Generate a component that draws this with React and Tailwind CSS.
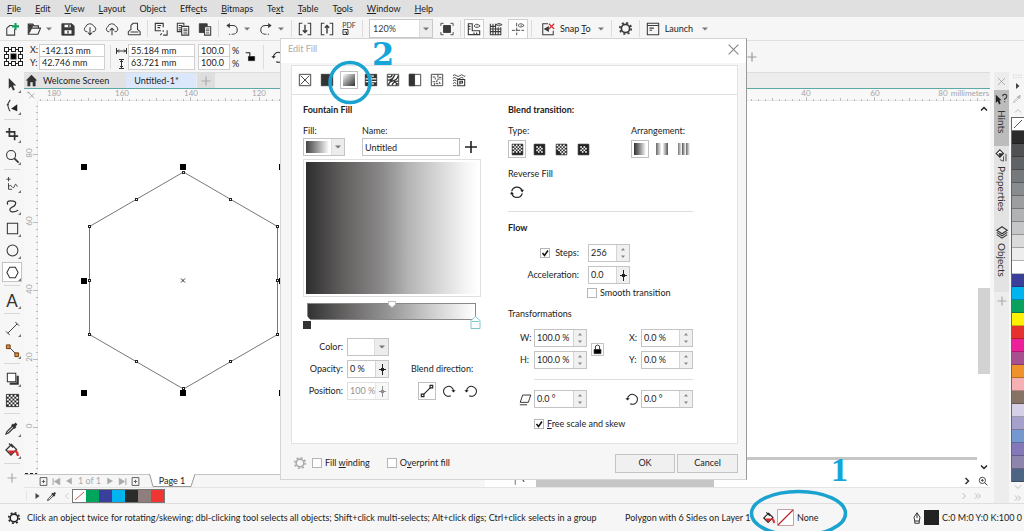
// src/App.jsx
import { useState } from "react";

const MENUS = [
  ["", "F", "ile"],
  ["", "E", "dit"],
  ["", "V", "iew"],
  ["", "L", "ayout"],
  ["Ob", "j", "ect"],
  ["Effe", "c", "ts"],
  ["", "B", "itmaps"],
  ["Te", "x", "t"],
  ["", "T", "able"],
  ["T", "o", "ols"],
  ["", "W", "indow"],
  ["", "H", "elp"],
];

const PALETTE = [
  "#2b2b2b", "#505152", "#606365", "#75797b", "#898c8e", "#9c9ea0", "#b1b2b4",
  "#c5c6c7", "#dadadb", "#ededed", "#ffffff", "#3b3f9c", "#00b4f0", "#0aa05e",
  "#fff100", "#e8302e", "#ec2099", "#a8508f", "#f0922c", "#f6b0b4", "#857466",
  "#d5d0e8", "#a5a0cc", "#7399cf", "#8478b8", "#8d85ac", "#4e6484",
];

const DOC_COLORS = ["#00a65d", "#3b3f9c", "#00b4f0", "#2b2b2b", "#8f7f7c", "#f03535"];

function Icon({ size = 16, className = "", children }) {
  return (
    <svg
      width={size}
      height={size}
      viewBox="0 0 16 16"
      fill="none"
      stroke="currentColor"
      className={`shrink-0 ${className}`}
      aria-hidden="true"
    >
      {children}
    </svg>
  );
}

const Caret = () => (
  <svg width="8" height="8" viewBox="0 0 8 8" className="shrink-0" aria-hidden="true">
    <path d="M1 2.5h6L4 5.5z" fill="#777" />
  </svg>
);

const Gear = ({ size = 16, className }) => (
  <Icon size={size} className={className}>
    <circle cx="8" cy="8" r="4.4" strokeWidth="1.8" />
    <circle cx="8" cy="8" r="6.1" strokeWidth="1.8" strokeDasharray="2.2 2.59" />
  </Icon>
);

const Plus = ({ size = 12, className }) => (
  <Icon size={size} className={className}>
    <path d="M8 2v12M2 8h12" strokeWidth="1.6" />
  </Icon>
);

const Bucket = ({ size = 16 }) => (
  <Icon size={size}>
    <path d="M7.5 2.500l5 5-5.500 5.500-5-5z" fill="#fff" strokeWidth="1.300" />
    <path d="M3.500 8.500h8L7 12.500z" fill="#d8262c" stroke="none" />
    <path d="M5 1.500l4 4" strokeWidth="1.300" />
    <path d="M12 8q2.500 2 2.500 5.500h-1.500q0-2.500-2-4z" fill="#d8262c" stroke="#d8262c" strokeWidth=".8" />
  </Icon>
);

const Dropper = ({ size = 16, className }) => (
  <Icon size={size} className={className}>
    <path d="M2 14l1-2.500 6-6 1.500 1.500-6 6z" strokeWidth="1.200" />
    <path d="M8 4.500l3.500 3.500M10 6l2.500-2.500" strokeWidth="2.600" />
  </Icon>
);

const RotateCcw = ({ size = 16, className }) => (
  <Icon size={size} className={className}>
    <path d="M2.800 8A5.700 5.700 0 1 1 6 13.500" strokeWidth="1.200" />
    <path d="M.4 7l2.500 2.800L5.400 7z" fill="currentColor" stroke="none" />
  </Icon>
);

const RotateCw = ({ size = 16, className }) => (
  <Icon size={size} className={className}>
    <path d="M13.200 8A5.700 5.700 0 1 0 10 13.500" strokeWidth="1.200" />
    <path d="M10.600 7l2.500 2.800L15.600 7z" fill="currentColor" stroke="none" />
  </Icon>
);

// Checker texture shared by the fill and blend icons
function Checks({ x = 2, y = 2, n = 6, skip = () => false }) {
  const cells = [];
  for (let r = 0; r < n; r++) {
    for (let c = 0; c < n; c++) {
      if ((r + c) % 2 === 0 && !skip(r, c)) {
        cells.push(<rect key={`${r}-${c}`} x={x + c * 2} y={y + r * 2} width="2" height="2" />);
      }
    }
  }
  return <g stroke="none" fill="#fff">{cells}</g>;
}

/* ---------- toolbar ---------- */

function Tool({ label, active, children }) {
  return (
    <button
      aria-label={label}
      className={`flex h-[18px] w-[18px] mx-[2px] shrink-0 items-center justify-center ${
        active ? "bg-white outline outline-[#d0d0d0]" : ""
      }`}
    >
      {children}
    </button>
  );
}

const Sep = () => <div className="mx-[2px] h-[17px] w-px shrink-0 bg-[#dcdcdc]" />;

function Toolbar() {
  return (
    <div className="flex h-[24px] shrink-0 items-center overflow-hidden border-b border-[#e0e0e0] bg-[#f6f6f6] pl-px text-[#3a3a3a]">
      <Tool label="New">
        <Icon size={14}>
          <path d="M9 4H5.500L2 7v8h9V8" strokeWidth="1.200" />
          <path d="M12 1v8M8 5h8" stroke="#14a05c" strokeWidth="2.400" />
        </Icon>
      </Tool>
      <Tool label="Open">
        <Icon size={14}>
          <path d="M1.500 13.500v-11h5l1.500 2h5v2.500" strokeWidth="1.400" />
          <path d="M1.500 14L4.500 7h11l-3 7z" strokeWidth="1.300" />
          <path d="M2 3.500h5l-4 8z" fill="currentColor" />
        </Icon>
      </Tool>
      <Caret />
      <div className="w-1 shrink-0" />
      <Tool label="Save">
        <Icon size={14}>
          <path d="M1 2h11.500L15 4.500V15H1z" fill="currentColor" />
          <path d="M4 3h7v3H4zM4 9.500h8v4H4z" fill="#fff" stroke="none" />
          <path d="M9 3v3M8 10v3" strokeWidth="1.500" />
        </Icon>
      </Tool>
      <Tool label="Download from cloud">
        <Icon size={14}>
          <path d="M5 11H3.500a3 3 0 0 1-.3-5.500 4.800 4.500 0 0 1 9.200-.5 3.200 3.200 0 0 1 .3 6H11" strokeWidth="1.100" />
          <path d="M8 6v8M5.500 12L8 14.500l2.500-2.500" strokeWidth="1.200" />
        </Icon>
      </Tool>
      <Tool label="Upload to cloud">
        <Icon size={14}>
          <path d="M5 11H3.500a3 3 0 0 1-.3-5.500 4.800 4.500 0 0 1 9.200-.5 3.200 3.200 0 0 1 .3 6H11" strokeWidth="1.100" />
          <path d="M8 15V7M5.500 9.500L8 7l2.500 2.500" strokeWidth="1.200" />
        </Icon>
      </Tool>
      <Tool label="Print">
        <Icon size={14}>
          <path d="M4.500 9V4L7 1.500h5V9M1.500 14.500V11l3-2.500M12 8.500l3 2.500v3.500H1.500M4 11.500h9" strokeWidth="1.200" />
        </Icon>
      </Tool>
      <Sep />
      <Tool label="Cut">
        <Icon size={14}>
          <path d="M8 10H1.500V1.500h9V6M4 4h4M4 6.500h3" strokeWidth="1.300" />
          <path d="M10.500 9.500v2M15 9.500v5.500h-4.500M9 13l-2 2" strokeWidth="1.200" />
        </Icon>
      </Tool>
      <Tool label="Copy">
        <Icon size={14}>
          <path d="M6 11H1.500V1.500H9V4M3 4h4M3 6.500h3M3 9h3M6.500 5h8v10h-8zM8.500 8H13M8.500 10H13M8.500 12.500H13" strokeWidth="1.200" />
        </Icon>
      </Tool>
      <Tool label="Paste">
        <Icon size={14}>
          <path d="M1.500 2h9v10h-9z" fill="currentColor" />
          <path d="M7.500 5.500h7V15h-7z" fill="#fff" strokeWidth="1.200" />
          <path d="M9 8h4M9 10h4M9 12.500h4" />
        </Icon>
      </Tool>
      <Sep />
      <Tool label="Undo"><Icon size={14}>
        <path d="M4 4h5a5 5 0 0 1 0 10" strokeWidth="1.200" />
        <path d="M9 14H4" strokeDasharray="1.500 1.500" />
        <path d="M5.500 1L1.500 4l4 3z" fill="currentColor" stroke="none" />
      </Icon></Tool>
      <Caret />
      <div className="w-1 shrink-0" />
      <Tool label="Redo"><Icon size={14}>
        <path d="M12 4H7a5 5 0 0 0 0 10" strokeWidth="1.200" />
        <path d="M7 14h5" strokeDasharray="1.500 1.500" />
        <path d="M10.500 1l4 3-4 3z" fill="currentColor" stroke="none" />
      </Icon></Tool>
      <Caret />
      <div className="w-1 shrink-0" />
      <Sep />
      <Tool label="Import"><Icon size={14}>
        <path d="M5 1.500H1.500v13H5M11 1.500h3.500v13H11" strokeWidth="1.200" />
        <path d="M8 3v9M5.500 9.500L8 12l2.500-2.500" strokeWidth="1.600" />
      </Icon></Tool>
      <Tool label="Export"><Icon size={14}>
        <path d="M5 1.500H1.500v13H5M11 1.500h3.500v13H11" strokeWidth="1.200" />
        <path d="M8 13V4M5.500 6.500L8 4l2.500 2.500" strokeWidth="1.600" />
      </Icon></Tool>
      <Tool label="Publish to PDF">
        <span className="flex flex-col items-start text-[7px] leading-[7px]">
          PDF
          <svg width="7" height="6" viewBox="0 0 7 6" fill="none" stroke="currentColor" aria-hidden="true">
            <path d="M1 .5h5v5H1zM2.500 3h2v2" />
          </svg>
        </span>
      </Tool>
      <Sep />
      <div className="relative ml-1 flex h-[19px] w-[64px] shrink-0 items-center">
        <select
          aria-label="Zoom level"
          className="h-full w-full appearance-none border border-[#c9c9c9] bg-white pl-[3px]"
        >
          <option>120%</option>
        </select>
        <div className="pointer-events-none absolute top-px right-px bottom-px flex w-[13px] items-center justify-center border-l border-[#ddd] bg-[#ececec]">
          <Caret />
        </div>
      </div>
      <div className="w-[3px] shrink-0" />
      <Tool label="Full screen"><Icon size={14}>
        <path d="M4 4h8v8H4z" fill="currentColor" />
        <path d="M1 4.500V1.500h3M12 1.500h3v3M15 11.500v3h-3M4 14.500H1v-3" />
      </Icon></Tool>
      <Sep />
      <Tool label="Show rulers" active><Icon size={14}>
        <path d="M1.500 2v12.500h13V10H6V2zM2 5h2M2 8h2M8 14v-2M11 14v-2" strokeWidth="1.300" />
        <path d="M8 4.500q3-4 7 0-4 3.500-7 0zM11 4.500h1" />
      </Icon></Tool>
      <Tool label="Show grid"><Icon size={14}>
        <path d="M1.500 2v12.500h12V6M1.500 5h6M1.500 8h12M1.500 11h12M4.500 2v12M7.500 2v12M10.500 6v8" strokeWidth="1.200" />
        <path d="M8 3q3-3 7 0-4 3-7 0zM11 3h1" />
      </Icon></Tool>
      <Tool label="Show guidelines" active><Icon size={14}>
        <path d="M6.500 1v14M1 9.500h14" strokeDasharray="4 1.500" />
        <path d="M8 4q3-4 7 0-4 3.500-7 0zM11 4h1" />
      </Icon></Tool>
      <Sep />
      <div className="w-[3px] shrink-0" />
      <Tool label="Snap off"><Icon size={14}>
        <path d="M8 2H2v12.500h12V10" strokeWidth="1.200" />
        <path d="M3 8l6-3.500v7z" fill="currentColor" stroke="none" />
        <path d="M9 2l6 6M15 2l-6 6" stroke="#d8262c" strokeWidth="1.300" />
      </Icon></Tool>
      <button className="ml-px flex items-center gap-[6px] whitespace-nowrap text-[#222]">
        <span>Snap <u>T</u>o</span>
        <Caret />
      </button>
      <div className="w-1 shrink-0" />
      <Sep />
      <div className="w-px shrink-0" />
      <Tool label="Options"><Gear size={15} /></Tool>
      <Sep />
      <Tool label="Launcher"><Icon size={14}>
        <path d="M1.500 1.500h13v13h-13zM1.500 4h13M4 7h5M4 9.500h3" strokeWidth="1.200" />
      </Icon></Tool>
      <button className="ml-px flex items-center gap-[8px] text-[#222]">
        Launch
        <Caret />
      </button>
    </div>
  );
}

/* ---------- property bar ---------- */

function PropInput({ label, value, className }) {
  return (
    <input
      aria-label={label}
      defaultValue={value}
      className={`h-[13px] border border-[#d0d0d0] bg-white px-[2px] ${className}`}
    />
  );
}

function PropertyBar() {
  return (
    <div className="flex h-[31px] shrink-0 items-center bg-[#f6f6f6] pl-1">
      <svg width="19" height="19" viewBox="0 0 19 19" fill="none" stroke="#222" className="mr-[7px] shrink-0" aria-hidden="true">
        <path d="M2.500 2.500h14v14h-14z" />
        <g fill="#fff">
          {[[1, 1], [8, 1], [15, 1], [1, 8], [15, 8], [1, 15], [8, 15], [15, 15]].map(([x, y]) => (
            <rect key={`${x}-${y}`} x={x - 0.5} y={y - 0.5} width="4" height="4" />
          ))}
        </g>
        <rect x="7" y="7" width="5" height="5" fill="#000" />
      </svg>
      <div className="flex flex-col">
        <label className="flex items-center">
          <span className="w-[9px]">X:</span>
          <PropInput label="X position" value="-142.13 mm" className="w-[66px]" />
        </label>
        <label className="flex items-center">
          <span className="w-[9px]">Y:</span>
          <PropInput label="Y position" value="42.746 mm" className="w-[66px] border-t-0" />
        </label>
      </div>
      <div className="mx-[5px] h-[24px] w-px bg-[#dcdcdc]" />
      <svg width="11" height="24" viewBox="0 0 11 24" fill="none" stroke="#333" className="mr-px shrink-0" aria-hidden="true">
        <path d="M.5 3v6M10.500 3v6M1 6h9M3 4.500L1.500 6 3 7.500M8 4.500L9.500 6 8 7.500" />
        <path d="M3 14.500h5M3 23.500h5M5.500 15v8M4 17l1.500-1.500L7 17M4 21l1.500 1.500L7 21" />
      </svg>
      <div className="flex flex-col">
        <PropInput label="Object width" value="55.184 mm" className="w-[67px]" />
        <PropInput label="Object height" value="63.721 mm" className="w-[67px] border-t-0" />
      </div>
      <div className="ml-[3px] flex flex-col">
        <PropInput label="Horizontal scale" value="100.0" className="w-[32px]" />
        <PropInput label="Vertical scale" value="100.0" className="w-[32px] border-t-0" />
      </div>
      <div className="ml-[2px] flex flex-col leading-[13px]">
        <span>%</span>
        <span>%</span>
      </div>
      <button aria-label="Lock ratio" className="ml-[6px]">
        <Icon size={11}>
          <path d="M1 2.500h6V8" strokeWidth="1.600" />
          <path d="M5 8h9v6H5z" fill="#000" />
        </Icon>
      </button>
      <div className="mx-[7px] h-[24px] w-px bg-[#dcdcdc]" />
      <RotateCcw size={14} />
      {/* The rest of the bar sits under the dialog */}
      <div className="ml-auto mr-[266px]"><Plus size={12} className="text-[#999]" /></div>
    </div>
  );
}

/* ---------- toolbox ---------- */

function BoxTool({ label, active, flyout = true, children }) {
  return (
    <button
      aria-label={label}
      className={`relative flex h-[18px] w-[18px] my-[2px] shrink-0 items-center justify-center ${
        active ? "bg-white outline outline-[#c4c4c4]" : ""
      }`}
    >
      {children}
      {flyout && (
        <svg width="3" height="3" className="absolute right-0 bottom-0" aria-hidden="true">
          <path d="M3 0v3H0z" fill="#777" />
        </svg>
      )}
    </button>
  );
}

const BoxSep = () => <div className="my-[2px] h-[2px] w-[16px] shrink-0 border-t border-[#d8d8d8]" />;

function Toolbox() {
  return (
    <div className="flex w-[24px] shrink-0 flex-col items-center overflow-hidden bg-[#f6f6f6] pt-px text-[#333]">
      <BoxTool label="Pick"><Icon size={15}>
        <path d="M4 1l8 8H8.500l2 4.500-2 1L6.500 10 4 12.500z" fill="#333" stroke="none" />
      </Icon></BoxTool>
      <BoxTool label="Shape"><Icon size={14}>
        <path d="M6 1L3 6q1 6 3 8M2 6.500h2.500" strokeWidth="1.200" />
        <path d="M14 6v8l-7-3z" fill="#222" stroke="none" />
      </Icon></BoxTool>
      <BoxSep />
      <BoxTool label="Crop"><Icon size={14}>
        <path d="M5 1v9.500h10M1 5.500h10V15" strokeWidth="1.900" />
      </Icon></BoxTool>
      <BoxTool label="Zoom"><Icon size={15}>
        <circle cx="6.500" cy="6.500" r="4.800" strokeWidth="1.100" />
        <path d="M10 10l4.500 4.500" strokeWidth="1.800" />
      </Icon></BoxTool>
      <BoxSep />
      <BoxTool label="Freehand"><Icon size={14}>
        <path d="M4 0v5M1.500 2.500h5M4 7v7h4M4 11q2-3 4 0t3-1 3 1" />
      </Icon></BoxTool>
      <BoxTool label="Artistic media"><Icon size={15}>
        <path d="M3 6Q1 2 6 2q7 0 5 4-1 2-4 3-3 2-1 4 3 2 8-1" strokeWidth="1.300" />
      </Icon></BoxTool>
      <BoxTool label="Rectangle"><Icon size={15}><path d="M2.500 2.500h11v11h-11z" strokeWidth="1.100" /></Icon></BoxTool>
      <BoxTool label="Ellipse"><Icon size={15}><circle cx="8" cy="8" r="5.800" strokeWidth="1.100" /></Icon></BoxTool>
      <BoxTool label="Polygon" active><Icon size={15}><path d="M2 8l3-5.500h6L14 8l-3 5.500H5z" strokeWidth="1.100" /></Icon></BoxTool>
      <BoxSep />
      <BoxTool label="Text"><span className="text-[17px] leading-none">A</span></BoxTool>
      <BoxSep />
      <BoxTool label="Dimension"><Icon size={15}><path d="M3 13L13 3M1 11l4 4M11 1l4 4" /></Icon></BoxTool>
      <BoxTool label="Connector"><Icon size={15}>
        <path d="M4 4l9 9" />
        <path d="M1.500 2h4v4h-4zM10.500 10.500h4v4h-4z" fill="#d98b3e" stroke="#6b3a10" />
      </Icon></BoxTool>
      <BoxSep />
      <BoxTool label="Drop shadow"><Icon size={15}>
        <path d="M5 13.500h8.500V5" strokeWidth="2.400" />
        <path d="M2.500 2.500h9v9h-9z" fill="#fff" strokeWidth="1.100" />
      </Icon></BoxTool>
      <BoxTool label="Transparency" flyout={false}><Icon size={15}>
        <path d="M1.500 1.500h13v13h-13z" fill="#222" />
        <Checks x={2} y={2} n={6} />
      </Icon></BoxTool>
      <BoxSep />
      <BoxTool label="Eyedropper"><Dropper size={16} /></BoxTool>
      <BoxTool label="Interactive fill"><Bucket size={16} /></BoxTool>
      <BoxSep />
      <BoxTool label="Customize" flyout={false}><Plus size={12} className="text-[#aaa]" /></BoxTool>
    </div>
  );
}

/* ---------- canvas ---------- */

function HorizontalRuler() {
  const ticks = [];
  for (let i = 0; i < 142; i++) ticks.push(i);
  return (
    <svg width="100%" height="12" className="min-w-0 flex-1" stroke="#bbb" fill="none">
      <path d="M0 11.500h2000" stroke="#e8e8e8" />
      {ticks.map((i) => {
        const x = Math.round(15.5 + (i - 2) * 6.84) + 0.5;
        const top = (i - 2) % 10 === 0 ? 8 : (i - 2) % 5 === 0 ? 9 : 10;
        return <path key={i} d={`M${x} ${top}V12`} />;
      })}
      <g fill="#a5a5a5" stroke="none" fontSize="8" textAnchor="middle">
        {[[16, "180"], [84, "160"], [153, "140"], [221, "120"], [768, "40"], [837, "60"], [905, "80"]].map(([x, t]) => (
          <text key={x} x={x} y="7">{t}</text>
        ))}
        <text x="932" y="7">millimeters</text>
      </g>
    </svg>
  );
}

function VerticalRuler() {
  const ticks = [];
  for (let i = 0; i < 55; i++) ticks.push(i);
  return (
    <svg width="14" height="100%" className="shrink-0 bg-[#f8f8f8]" stroke="#bbb" fill="none">
      <path d="M13.500 0v1000" stroke="#e8e8e8" />
      {ticks.map((i) => {
        const y = Math.round(52.5 + (i - 7) * 6.84) + 0.5;
        const left = (i - 7) % 10 === 0 ? 9 : 12;
        return <path key={i} d={`M${left} ${y}H14`} />;
      })}
      <g fill="#a5a5a5" stroke="none" fontSize="8" textAnchor="middle">
        {[[52, "80"], [120, "60"], [188, "40"], [256, "20"], [325, "0"]].map(([y, t]) => (
          <text key={y} transform={`translate(8 ${y}) rotate(-90)`}>{t}</text>
        ))}
      </g>
      <path d="M1 372.500h12" stroke="#222" strokeDasharray="3 2" />
    </svg>
  );
}

function Drawing() {
  const nodes = [
    [145, 71], [98, 98], [192, 98], [51, 125], [239, 125], [51, 179],
    [239, 179], [51, 233], [239, 233], [98, 260], [192, 260], [145, 287],
  ];
  const handles = [[46, 66], [145, 66], [244, 66], [46, 180], [244, 180], [46, 292], [145, 292], [244, 292]];
  return (
    <svg width="100%" height="100%" className="absolute inset-0" fill="none">
      <path d="M145.500 71l94 54.500v108l-94 54.500-94-54.500v-108z" stroke="#777" />
      <g fill="#fff" stroke="#222">
        {nodes.map(([x, y]) => <rect key={`${x}-${y}`} x={x - 0.5} y={y - 0.5} width="2" height="2" />)}
      </g>
      <g fill="#000">
        {handles.map(([x, y]) => <rect key={`${x}-${y}`} x={x - 3} y={y - 3} width="6" height="6" />)}
      </g>
      <path d="M143 177.500l4 4M147 177.500l-4 4" stroke="#333" />
      {/* page edge */}
      <path d="M708 357.500h231" stroke="#c6c6c6" strokeWidth="3" />
    </svg>
  );
}

function Workspace() {
  return (
    <div className="flex min-w-0 flex-1 flex-col">
      <div className="flex h-[17px] shrink-0 items-stretch border-t border-b border-t-[#ddd] border-b-[#5aa9a5] bg-[#ededed]">
        <button className="flex w-[102px] items-center gap-[5px] bg-[#e2e2e2] pl-px">
          <Icon size={13}>
            <path d="M8 1L1 8h2v7h3.500v-5h3v5H13V8h2z" fill="#333" stroke="none" />
          </Icon>
          Welcome Screen
        </button>
        <button className="w-[70px] bg-[#dbe8fc] pr-[9px]">Untitled-1*</button>
        <button aria-label="New document" className="ml-px flex w-[18px] items-center justify-center bg-[#dedede]">
          <Plus size={12} className="text-[#aaa]" />
        </button>
      </div>
      <div className="flex h-[12px] shrink-0 bg-[#f8f8f8] text-[#777]">
        <div className="flex w-[14px] items-center justify-center">
          <Icon size={9}><path d="M2 1v3M1 3h4M4 4l9 9M4 13L13 4" /></Icon>
        </div>
        <HorizontalRuler />
      </div>
      <div className="flex min-h-0 flex-1 bg-white">
        <VerticalRuler />
        <div className="relative min-w-0 flex-1 overflow-hidden">
          <Drawing />
        </div>
        <div className="flex w-[12px] shrink-0 flex-col items-center bg-white">
          <button aria-label="Scroll up" className="flex h-[15px] items-center">
            <Icon size={8}><path d="M2 11l6-6 6 6" strokeWidth="3" /></Icon>
          </button>
          <div className="flex w-full flex-1 flex-col">
            <div className="basis-1/2" />
            <div className="h-[86px] w-full bg-[#d2d2d2]" />
          </div>
          <button aria-label="Scroll down" className="flex h-[14px] items-center">
            <Icon size={8}><path d="M2 5l6 6 6-6" strokeWidth="3" /></Icon>
          </button>
        </div>
      </div>
      {/* page navigator */}
      <div className="flex h-[13px] shrink-0 items-center bg-white text-[#aaa]">
        <div className="flex h-full w-[127px] shrink-0 items-center gap-[4px] border-t border-[#c4c4c4] bg-[#f6f6f6] pl-[15px]">
          <button aria-label="Add page before"><Icon size={9} className="text-[#555]"><path d="M2 1h12v14H2zM8 5v6M5 8h6" strokeWidth="1.600" /></Icon></button>
          <button aria-label="First page"><Icon size={9}><path d="M2 2v12" strokeWidth="2" /><path d="M14 2v12L4 8z" fill="currentColor" /></Icon></button>
          <button aria-label="Previous page"><Icon size={8}><path d="M13 2v12L3 8z" fill="currentColor" /></Icon></button>
          <span className="px-px whitespace-nowrap">1 of 1</span>
          <button aria-label="Next page"><Icon size={8}><path d="M3 2v12l10-6z" fill="currentColor" /></Icon></button>
          <button aria-label="Last page"><Icon size={9}><path d="M14 2v12" strokeWidth="2" /><path d="M2 2v12l10-6z" fill="currentColor" /></Icon></button>
          <button aria-label="Add page after"><Icon size={9} className="text-[#555]"><path d="M2 1h12v14H2zM8 5v6M5 8h6" strokeWidth="1.600" /></Icon></button>
        </div>
        <div className="relative flex h-full shrink-0 items-center bg-[#f6f6f6] pl-[6px]">
          <svg width="46" height="13" viewBox="0 0 46 13" className="absolute -left-[2px] top-0" aria-hidden="true">
            <path d="M0 0h46l-4 12.500H4z" fill="#fff" />
            <path d="M.5 0L4 12.500h38L46 0" fill="none" stroke="#999" />
          </svg>
          <button className="relative w-[38px] pr-2 whitespace-nowrap text-[#222]">Page 1</button>
        </div>
        <div className="h-full w-[290px] border-t border-[#c4c4c4] bg-[#f6f6f6]" />
        <div className="ml-[28px] h-full flex w-[22px] items-end text-[#444]">
          <Icon size={12}><path d="M3 3v10" /><path d="M11 4l4 5" strokeWidth="1.600" /></Icon>
        </div>
        <div className="ml-[1px] h-[7px] w-[178px] shrink-0 self-end bg-[#c6c6c6]" />
        <div className="ml-auto flex items-center gap-[7px] pr-[2px] text-[#333]">
          <Icon size={8}><path d="M5 2l6 6-6 6" strokeWidth="3" /></Icon>
          <Icon size={10}><circle cx="7" cy="7" r="5" strokeWidth="1.400" /><path d="M11 11l4 4M5 7h4M7 5v4" strokeWidth="1.600" /></Icon>
        </div>
      </div>
      {/* document palette */}
      <div className="flex h-[16px] shrink-0 items-center border-t border-[#e4e4e4] bg-[#f6f6f6] text-[#333]">
        <Icon size={10}><path d="M4 1v14" stroke="#bbb" strokeDasharray="2 2" /></Icon>
        <Icon size={8}><path d="M3 2v12l8-6z" fill="#444" stroke="none" /></Icon>
        <Dropper size={12} className="ml-[4px]" />
        <Icon size={8} className="ml-[5px] text-[#ccc]"><path d="M11 2L5 8l6 6" strokeWidth="2" /></Icon>
        <div className="ml-px flex border border-[#777]">
          <button aria-label="No color" className="h-[12px] w-[13px] bg-white">
            <svg width="13" height="12"><path d="M2 10L11 2" stroke="#c55" /></svg>
          </button>
          {DOC_COLORS.map((c) => (
            <button key={c} aria-label={c} className="h-[12px] w-[13px]" style={{ backgroundColor: c }} />
          ))}
        </div>
        <div className="ml-auto flex gap-[6px] pr-[8px] text-[#bbb]">
          <Icon size={8}><path d="M5 2l6 6-6 6" strokeWidth="2" /></Icon>
          <Icon size={8}><path d="M2 3l5 5-5 5M8 3l5 5-5 5" strokeWidth="2" /></Icon>
        </div>
      </div>
    </div>
  );
}

/* ---------- dockers and colour palette ---------- */

function DockerTab({ label, className, children }) {
  return (
    <button className={`flex w-full shrink-0 flex-col items-center gap-[4px] pt-[3px] ${className}`}>
      {children}
      <span className="text-[10px] leading-[12px] [writing-mode:vertical-rl]">{label}</span>
    </button>
  );
}

function Dockers() {
  return (
    <div className="ml-[4px] flex w-[15px] shrink-0 flex-col items-center bg-[#ededed] text-[#333]">
      <button aria-label="Close docker" className="flex h-[18px] items-center text-[#999]">
        <Icon size={9}><path d="M2 2l12 12M14 2L2 14" strokeWidth="1.400" /></Icon>
      </button>
      <DockerTab label="Hints" className="h-[56px] bg-[#bcbcbc]">
        <Icon size={13}>
          <path d="M1 2l7 7H5.500l1.500 4-2 1-1.500-4L1 12z" fill="#222" stroke="none" />
          <path d="M9.500 4q0-2.500 2.500-2.500T14.500 4 12 7v1.500M12 10v1.500" strokeWidth="1.300" />
        </Icon>
      </DockerTab>
      <DockerTab label="Properties" className="h-[76px] bg-[#e3e3e3]">
        <Icon size={13}>
          <path d="M6 1l4.500 4.500L6 10 1.500 5.500z" fill="#fff" strokeWidth="1.400" />
          <path d="M5 5.500l5 .5-4 4zM10.500 9v6M13.500 6v9M6 13l4 2" fill="#333" />
        </Icon>
      </DockerTab>
      <DockerTab label="Objects" className="h-[70px] bg-[#e3e3e3]">
        <Icon size={14}>
          <path d="M8 2l6 4-6 4-6-4zM2 8.500l6 4 6-4M2 11l6 4 6-4" strokeWidth="1.200" />
        </Icon>
      </DockerTab>
      <button aria-label="Add docker" className="mt-[3px]"><Plus size={12} className="text-[#aaa]" /></button>
    </div>
  );
}

function ColorPalette() {
  return (
    <div className="ml-[2px] flex w-[13px] shrink-0 flex-col items-center bg-[#f6f6f6] text-[#bbb]">
      <Icon size={10}><path d="M0 5h16M0 9h16" strokeDasharray="2 2" /></Icon>
      <Icon size={8}><path d="M4 2v12l7-6z" fill="#444" stroke="none" /></Icon>
      <div className="flex h-[19px] items-center"><Dropper size={11} /></div>
      <div className="flex h-[12px] items-center"><Icon size={8}><path d="M2 11l6-6 6 6" strokeWidth="2" /></Icon></div>
      <div className="flex w-full flex-col border-t border-l border-[#666]">
        <button aria-label="No color" className="h-[13px] border-b border-[#777] bg-white">
          <svg width="12" height="12"><path d="M2 10L10 2" stroke="#555" /></svg>
        </button>
        {PALETTE.map((c) => (
          <button
            key={c}
            aria-label={c}
            className="h-[13px] w-full border-b border-black/25"
            style={{ backgroundColor: c }}
          />
        ))}
      </div>
      <div className="flex h-[13px] items-center"><Icon size={8}><path d="M2 5l6 6 6-6" strokeWidth="2" /></Icon></div>
      <div className="flex h-[12px] items-center"><Icon size={8}><path d="M2 3l5 5-5 5M8 3l5 5-5 5" strokeWidth="2" /></Icon></div>
    </div>
  );
}

/* ---------- dialog ---------- */

function Check({ label, checked = false, className = "", children }) {
  const [on, setOn] = useState(checked);
  return (
    <label className={`flex h-[12px] items-center gap-[3px] whitespace-nowrap ${className}`}>
      <span className="relative flex h-[10px] w-[10px]">
        <input
          type="checkbox"
          aria-label={label}
          checked={on}
          onChange={(e) => setOn(e.target.checked)}
          className="h-[10px] w-[10px] appearance-none border border-[#b5b5b5] bg-white"
        />
        {on && (
          <svg width="10" height="10" className="pointer-events-none absolute inset-0" aria-hidden="true">
            <path d="M2.500 5l2 2.500 3.500-5" fill="none" stroke="#111" strokeWidth="1.500" />
          </svg>
        )}
      </span>
      {children}
    </label>
  );
}

function Spin({ label, value, kind = "arrows", disabled, className }) {
  return (
    <span className={`flex h-[18px] border border-[#c4c4c4] bg-white ${disabled ? "opacity-50" : ""} ${className}`}>
      <input
        aria-label={label}
        defaultValue={value}
        disabled={disabled}
        className="w-0 min-w-0 flex-1 pl-[2px] text-[#222]"
      />
      <button
        type="button"
        aria-label={`Adjust ${label}`}
        disabled={disabled}
        className="flex w-[13px] items-center justify-center border-l border-[#d4d4d4] bg-[#f0f0f0]"
      >
        {kind === "arrows" ? (
          <svg width="6" height="14" viewBox="0 0 6 14" aria-hidden="true">
            <path d="M3 2L5 4.500H1zM3 12L1 9.500h4z" fill="#888" />
          </svg>
        ) : (
          <svg width="9" height="13" viewBox="0 0 9 13" aria-hidden="true">
            <path d="M4 1h1v11H4zM1 6h7v1H1zM3 5h3v3H3z" fill="#222" />
          </svg>
        )}
      </button>
    </span>
  );
}

function Pick({ label, active, children }) {
  return (
    <button
      aria-label={label}
      className={`mr-[4px] flex h-[18px] w-[18px] shrink-0 items-center justify-center ${
        active ? "border border-[#c0c0c0] bg-white" : ""
      }`}
    >
      {children}
    </button>
  );
}

function FillTabs() {
  return (
    <div className="flex h-[29px] items-center border-b border-[#e2e2e2] pl-[4px] text-[#333]">
      <Pick label="No fill"><Icon size={14}><path d="M1.500 1.500h13v13h-13zM3 3l10 10M13 3L3 13" /></Icon></Pick>
      <Pick label="Uniform fill"><Icon size={14}><path d="M1.500 1.500h13v13h-13z" fill="currentColor" /></Icon></Pick>
      <Pick label="Fountain fill" active>
        <span className="h-[12px] w-[12px] bg-linear-to-br from-white to-[#333]" />
      </Pick>
      <Pick label="Vector pattern fill"><Icon size={14}>
        <path d="M1.500 1.500h13v13h-13z" fill="currentColor" />
        <path d="M5 2.500h1.500v2H5zM9.500 2.500H11v2H9.500zM5 11.500h1.500v2H5zM9.500 11.500H11v2H9.500zM2 6h12v1.500H2zM2 9h12v1.500H2zM7.500 2h1v12h-1z" fill="#fff" stroke="none" />
      </Icon></Pick>
      <Pick label="Bitmap pattern fill"><Icon size={14}>
        <path d="M1.500 1.500h13v13h-13z" />
        <path d="M2 4q4 2 5-2M2 8q5 1 8-6M3 14q0-4 5-5t6-6M7 14q1-4 7-5M11 14l3-2M4 11l4-5M9 9l4 4" strokeWidth="1.600" />
      </Icon></Pick>
      <Pick label="Two-color pattern fill"><Icon size={14}>
        <path d="M1.500 1.500h13v13h-13z" />
        <path d="M1.500 1.500h6v13h-6z" fill="currentColor" />
      </Icon></Pick>
      <Pick label="Texture fill"><Icon size={14}>
        <path d="M1.500 1.500h13v13h-13z" />
        <path d="M3 4.500h3v3M9 2v3h4M3 10h5V7h5M5 14v-2h4v2M11 10v2h2" strokeDasharray="3 1" />
      </Icon></Pick>
      <Pick label="PostScript fill"><Icon size={14}>
        <path d="M1 3q2-2 4 0t4 0 4 0 2 0M1 6q2-2 4 0t4 0 4 0M1 9q2-2 4 0M1 12q2-2 4 0M1 14.500h4" />
        <path d="M6.500 7.500h8v7h-8zM9 13V9.500h3v2H9" strokeWidth="1.200" />
      </Icon></Pick>
    </div>
  );
}

function BlendIcon({ kind }) {
  const skip = {
    linear: (r) => r === 5,
    radial: (r, c) => Math.hypot(r - 2.5, c - 2.5) > 2.4,
    conical: (r, c) => r > c + 2,
    square: (r, c) => r === 0 || c === 0 || r === 5 || c === 5,
  }[kind];
  return (
    <Icon size={13}>
      <path d="M1.500 1.500h13v13h-13z" fill="currentColor" />
      <Checks n={6} skip={skip} />
    </Icon>
  );
}

function FountainColumn() {
  return (
    <div className="w-[205px] shrink-0 pl-[11px]">
      <h2 className="mt-[9px] h-[12px] font-bold">Fountain Fill</h2>
      <div className="mt-[9px] flex items-end">
        <label className="flex w-[59px] flex-col">
          <span className="mb-px h-[12px]">Fill:</span>
          <button className="flex h-[18px] w-[42px] border border-[#c4c4c4] bg-white">
            <span className="m-[2px] flex-1 bg-linear-to-r from-[#444] to-white" />
            <span className="flex h-full w-[13px] items-center justify-center border-l border-[#ddd] bg-[#ececec]"><Caret /></span>
          </button>
        </label>
        <label className="flex flex-col">
          <span className="mb-px h-[12px]">Name:</span>
          <input defaultValue="Untitled" className="h-[18px] w-[98px] border border-[#c4c4c4] bg-white px-[2px]" />
        </label>
        <button aria-label="Save fill" className="ml-[3px] flex h-[18px] items-center"><Plus size={16} /></button>
      </div>
      <div className="mt-[3px] h-[138px] w-[178px] border border-[#e0e0e0] p-[2px]">
        <div className="h-full bg-[linear-gradient(to_right,#2e2d2d,#5e5b5b_20%,#8d8b8b_45%,#b5b5b5_60%,#d5d5d5_76%,#f3f3f3_92%,#fff)]" />
      </div>
      <div className="relative mt-[6px] ml-[4px] h-[17px] w-[169px] border border-[#888] bg-[linear-gradient(to_right,#333,#6b6868_25%,#999_50%,#d0d0d0_75%,#fff)]">
        <svg width="10" height="7" viewBox="0 0 10 7" className="absolute -top-[3px] left-[79px]" aria-hidden="true">
          <path d="M1.500.5h7v3L5 6.500 1.500 3.500z" fill="#fff" stroke="#bbb" />
        </svg>
        <svg width="10" height="13" viewBox="0 0 10 13" className="absolute top-[12px] -left-[6px]" aria-hidden="true">
          <path d="M5 0l4 4.500H1z" fill="#fff" />
          <path d="M1 5h8v8H1z" fill="#333" />
        </svg>
        <svg width="11" height="13" viewBox="0 0 11 13" className="absolute top-[12px] -right-[6px]" aria-hidden="true">
          <path d="M5.500.5l4.500 4v8H1v-8z" fill="#fff" stroke="#7cc8ca" />
          <path d="M2 5.500h7" stroke="#7cc8ca" />
        </svg>
      </div>
      <div className="mt-[18px] flex">
        <div className="flex w-[86px] flex-col items-end gap-[4px]">
          <label className="flex items-center gap-[4px]">
            Color:
            <button aria-label="Node color" className="flex h-[18px] w-[42px] justify-end border border-[#c4c4c4] bg-white">
              <span className="flex h-full w-[14px] items-center justify-center border-l border-[#ddd] bg-[#ececec]"><Caret /></span>
            </button>
          </label>
          <label className="flex items-center gap-[4px]">
            Opacity:
            <Spin label="Opacity" value="0 %" kind="slider" className="w-[42px]" />
          </label>
          <label className="flex items-center gap-[4px]">
            Position:
            <Spin label="Position" value="100 %" kind="slider" disabled className="w-[42px]" />
          </label>
        </div>
        <div className="mt-[22px] ml-[22px] flex flex-col gap-[4px]">
          <span className="h-[18px] leading-[18px] whitespace-nowrap">Blend direction:</span>
          <div className="flex pl-[7px]">
            <Pick label="Linear blend" active><Icon size={14}>
              <path d="M3 13L13 3" strokeWidth="1.300" />
              <path d="M1.500 11.500h3v3h-3zM11.500 1.500h3v3h-3z" fill="#fff" strokeWidth="1.300" />
            </Icon></Pick>
            <Pick label="Clockwise blend"><RotateCw size={14} /></Pick>
            <Pick label="Counterclockwise blend"><RotateCcw size={14} /></Pick>
          </div>
        </div>
      </div>
    </div>
  );
}

function OptionsColumn() {
  return (
    <div className="w-[196px] shrink-0 pl-[11px]">
      <h2 className="mt-[9px] h-[12px] font-bold">Blend transition:</h2>
      <div className="mt-[9px] flex">
        <div className="w-[123px] shrink-0">
          <div className="mb-[3px] h-[12px]">Type:</div>
          <div className="flex">
            <Pick label="Linear" active><BlendIcon kind="linear" /></Pick>
            <Pick label="Elliptical"><BlendIcon kind="radial" /></Pick>
            <Pick label="Conical"><BlendIcon kind="conical" /></Pick>
            <Pick label="Rectangular"><BlendIcon kind="square" /></Pick>
          </div>
        </div>
        <div>
          <div className="mb-[3px] h-[12px]">Arrangement:</div>
          <div className="flex">
            <Pick label="Default" active><span className="h-[12px] w-[12px] bg-linear-to-r from-[#333] to-white" /></Pick>
            <Pick label="Repeat and mirror"><span className="h-[12px] w-[12px] bg-[linear-gradient(to_right,#666,#fff_45%,#fff_55%,#555)]" /></Pick>
            <Pick label="Repeat"><span className="h-[12px] w-[12px] bg-[linear-gradient(to_right,#777,#fff_33%,#555_34%,#fff_66%,#666_67%,#fff)]" /></Pick>
          </div>
        </div>
      </div>
      <div className="mt-[10px] h-[12px]">Reverse Fill</div>
      <button aria-label="Reverse fill" className="mt-[3px] flex h-[18px] w-[18px] items-center justify-center">
        <Icon size={14}>
          <path d="M2 7a6.200 6.200 0 0 1 12 0M14 9.500a6.200 6.200 0 0 1-12 0" strokeWidth="1.400" />
          <path d="M11.500 5.500H16L14 8.500zM0 10.500h4.500L2 7.500z" fill="currentColor" stroke="none" />
        </Icon>
      </button>
      <div className="mt-[10px] border-t border-[#dedede]" />
      <h2 className="mt-[10px] h-[12px] font-bold">Flow</h2>
      <div className="mt-[10px] flex items-center">
        <Check label="Steps" checked className="ml-auto gap-[5px] pr-[9px]">Steps:</Check>
        <Spin label="Steps" value="256" className="mr-[63px] w-[42px]" />
      </div>
      <label className="mt-[4px] flex items-center">
        <span className="ml-auto pr-[9px]">Acceleration:</span>
        <Spin label="Acceleration" value="0.0" kind="slider" className="mr-[63px] w-[42px]" />
      </label>
      <Check label="Smooth transition" className="mt-[3px] ml-[79px]">Smooth transition</Check>
      <div className="mt-[9px] h-[12px]">Transformations</div>
      <div className="mt-[9px] flex items-center pl-[12px]">
        <div className="flex flex-col gap-[4px]">
          <label className="flex items-center"><span className="w-[14px]">W:</span><Spin label="Width" value="100.0 %" className="w-[53px]" /></label>
          <label className="flex items-center"><span className="w-[14px]">H:</span><Spin label="Height" value="100.0 %" className="w-[53px]" /></label>
        </div>
        <button aria-label="Lock ratio" className="ml-[4px] flex h-[13px] w-[13px] items-center justify-center border border-[#c4c4c4]">
          <Icon size={11}>
            <path d="M5 8V3q3-3 6 0v5" strokeWidth="1.300" />
            <path d="M3 8h10v6H3z" fill="#000" />
          </Icon>
        </button>
        <div className="ml-auto flex flex-col gap-[4px]">
          <label className="flex items-center"><span className="w-[12px]">X:</span><Spin label="X offset" value="0.0 %" className="w-[52px]" /></label>
          <label className="flex items-center"><span className="w-[12px]">Y:</span><Spin label="Y offset" value="0.0 %" className="w-[52px]" /></label>
        </div>
      </div>
      <div className="mt-[10px] ml-[26px] border-t border-[#dedede]" />
      <div className="mt-[10px] flex items-center justify-between pl-[11px]">
        <label className="flex items-center gap-[2px]">
          <Icon size={13}><path d="M4.500 2.500h10l-3 9h-10zM1 14.500h9" strokeWidth="1.100" /></Icon>
          <Spin label="Skew" value="0.0 °" className="w-[53px]" />
        </label>
        <label className="flex items-center gap-[2px]">
          <RotateCcw size={14} />
          <Spin label="Rotate" value="0.0 °" className="w-[52px]" />
        </label>
      </div>
      <Check label="Free scale and skew" checked className="mt-[10px] ml-[26px]"><span><u>F</u>ree scale and skew</span></Check>
    </div>
  );
}

function EditFillDialog() {
  return (
    <div role="dialog" aria-label="Edit Fill" className="absolute top-[38px] left-[280px] w-[467px] border border-[#d4d4d4] border-r-[#999] bg-[#f6f6f6]">
      <div className="flex h-[24px] items-center justify-between bg-white pr-[6px] pb-[4px] pl-[7px] text-[#aaa]">
        Edit Fill
        <button aria-label="Close"><Icon size={13} className="text-[#888]"><path d="M2 2l12 12M14 2L2 14" strokeWidth="1.400" /></Icon></button>
      </div>
      <div className="mt-[2px] mr-[8px] ml-[10px] h-[379px] border border-[#e2e2e2] bg-white">
        <FillTabs />
        <div className="flex">
          <FountainColumn />
          <OptionsColumn />
        </div>
      </div>
      <div className="flex h-[35px] items-center pt-[3px] pr-[8px] pl-[12px]">
        <button aria-label="Fill settings"><Gear size={14} className="text-[#aaa]" /></button>
        <Check label="Fill winding" className="ml-[5px]"><span>Fill <u>w</u>inding</span></Check>
        <Check label="Overprint fill" className="ml-[17px]"><span>O<u>v</u>erprint fill</span></Check>
        <button className="ml-auto h-[19px] w-[60px] border border-[#c4c4c4] bg-[#f0f0f0]">OK</button>
        <button className="ml-[2px] h-[19px] w-[61px] border border-[#c4c4c4] bg-[#f0f0f0]">Cancel</button>
      </div>
    </div>
  );
}

/* ---------- status bar ---------- */

function StatusBar() {
  return (
    <footer className="flex h-[28px] shrink-0 items-center overflow-hidden border-t border-[#dedede] bg-[#f6f6f6] whitespace-nowrap">
      <div className="flex w-[27px] shrink-0 items-center pl-[7px]"><Gear size={14} /></div>
      <span className="w-[598px] shrink-0">
        Click an object twice for rotating/skewing; dbl-clicking tool selects all objects; Shift+click multi-selects; Alt+click digs; Ctrl+click selects in a group
      </span>
      <span className="w-[137px] shrink-0">Polygon with 6 Sides on Layer 1</span>
      <Bucket size={14} />
      <svg width="17" height="17" className="mr-[3px] ml-px shrink-0" aria-hidden="true">
        <path d="M.5.5h16v16H.5z" fill="#fff" stroke="#c9a0a0" />
        <path d="M1 16L16 1" stroke="#b3262b" strokeWidth="1.300" />
      </svg>
      <span className="w-[114px] shrink-0">None</span>
      <Icon size={12}><path d="M5 12h6v3H5zM5 12L4 7l4-6 4 6-1 5M8 2v6" strokeWidth="1.200" /></Icon>
      <span className="mr-[3px] ml-px h-[15px] w-[15px] shrink-0 bg-[#222]" />
      <span>C:0 M:0 Y:0 K:100 0</span>
    </footer>
  );
}

/* ---------- step callouts ---------- */

function Callouts() {
  return (
    <div className="pointer-events-none absolute inset-0 overflow-hidden">
      <svg width="100%" height="100%" fill="none" stroke="#1ba3cf">
        <circle cx="350" cy="82.500" r="20" strokeWidth="3.500" />
        <ellipse cx="798.500" cy="513.500" rx="47" ry="22" strokeWidth="3.500" />
      </svg>
      <span className="absolute top-[38px] left-[372px] font-['DejaVu_Serif'] text-[32px] leading-[32px] font-bold text-[#14a5da]">2</span>
      <span className="absolute top-[453px] left-[831px] font-['Liberation_Serif'] text-[34px] leading-[34px] font-bold text-[#14a5da]">1</span>
    </div>
  );
}

export default function App() {
  return (
    <div className="relative flex h-screen flex-col overflow-hidden bg-[#f6f6f6] font-['Lato','Noto_Sans',sans-serif] text-[9px] leading-[12px] text-[#222]">
      <nav className="flex h-[17px] shrink-0 items-center gap-[14px] bg-[#e0e0e0] pl-[7px]">
        {MENUS.map(([a, b, c]) => (
          <button key={a + b + c}>{a}<u>{b}</u>{c}</button>
        ))}
      </nav>
      <Toolbar />
      <PropertyBar />
      <div className="flex min-h-0 flex-1">
        <Toolbox />
        <Workspace />
        <Dockers />
        <ColorPalette />
      </div>
      <StatusBar />
      <EditFillDialog />
      <Callouts />
    </div>
  );
}
